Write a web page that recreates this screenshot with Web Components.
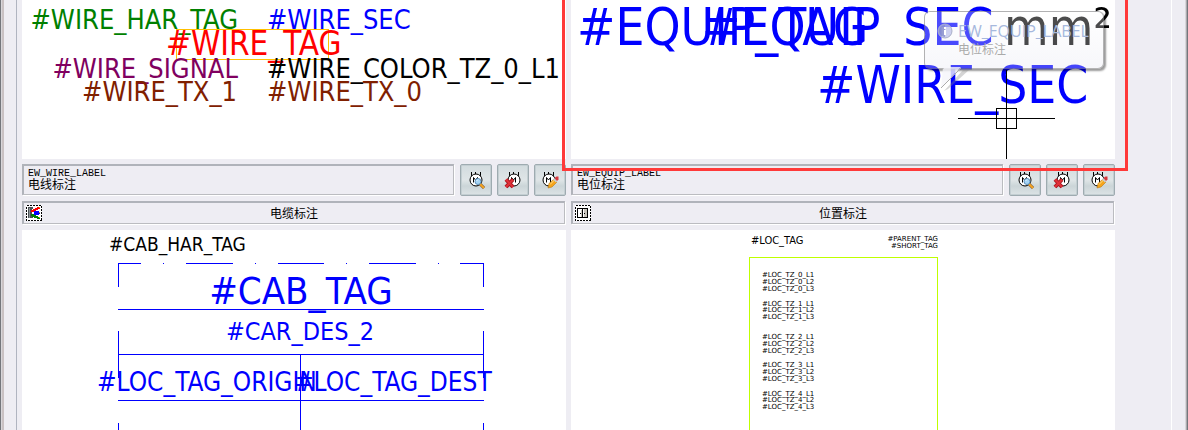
<!DOCTYPE html>
<html lang="zh-CN">
<head>
<meta charset="utf-8">
<title>电线标注</title>
<style>
	html, body {
		margin: 0;
		min-height: 100%;
	}
	body {
		display: flex;
		min-height: 100vh;
		background: #eeedf3;
		color: #000;
		font-family: "Liberation Sans", "Noto Sans CJK SC", sans-serif;
	}
</style>
</head>
<body>
<label-window>
	<label-card>
		<wire-drawing slot="drawing"></wire-drawing>
		<span slot="code">EW_WIRE_LABEL</span>
		<span slot="name">电线标注</span>
	</label-card>
	<label-card marked>
		<equip-drawing slot="drawing"></equip-drawing>
		<balloon-tip slot="tip">
			<span slot="title">EW_EQUIP_LABEL</span>
			电位标注
		</balloon-tip>
		<span slot="code">EW_EQUIP_LABEL</span>
		<span slot="name">电位标注</span>
	</label-card>
	<label-section>
		<section-icon slot="icon" kind="cable"></section-icon>
		电缆标注
		<cable-drawing slot="drawing"></cable-drawing>
	</label-section>
	<label-section>
		<section-icon slot="icon" kind="location"></section-icon>
		位置标注
		<location-drawing slot="drawing"></location-drawing>
	</label-section>
</label-window>

<script>
	const drawingStyle = /* html */ `
		<style>
			:host {
				display: block;
				background: #fff;
				font-family: "DejaVu Sans Condensed", "DejaVu Sans", sans-serif;
			}
			svg {
				display: block;
				width: 100%;
				height: auto;
			}
			text {
				white-space: pre;
			}
			.line {
				fill: none;
				shape-rendering: crispEdges;
			}
		</style>`

	class LabelWindow extends HTMLElement {
		constructor() {
			super()
			this.attachShadow({ mode: 'open' })
			this.shadowRoot.innerHTML = /* html */ `
			<style>
				:host {
					flex: 1;
					display: flex;
					min-width: 0;
					box-sizing: border-box;
					border-left: 1px solid #74767c;
					border-right: 1px solid #74767c;
				}
				.edge {
					width: 1px;
					background: #d8d6da;
					border-right: 2px solid #c9c1c3;
				}
				.edge.right {
					border-right: 1px solid #aaa9ad;
				}
				.pane {
					flex: 1;
					display: flex;
					margin: 0 13px 0 12px;
					border-left: 1px solid #b0b4c0;
					border-right: 1px solid #fff;
					min-width: 0;
				}
				.grid {
					flex: 1;
					display: grid;
					grid-template-columns: minmax(0, 1fr) minmax(0, 1fr);
					align-content: start;
					gap: 5px;
					padding: 0 56px 0 5px;
				}
			</style>
			<div class="edge"></div>
			<main class="pane"><div class="grid"><slot></slot></div></main>
			<div class="edge right"></div>
			`
		}
	}

	class LabelCard extends HTMLElement {
		constructor() {
			super()
			this.attachShadow({ mode: 'open' })
			this.shadowRoot.innerHTML = /* html */ `
			<style>
				:host {
					display: block;
					position: relative;
				}
				.footer {
					display: flex;
					gap: 5px;
					margin-top: 5px;
				}
				.info {
					flex: 1;
					box-sizing: border-box;
					height: 31px;
					padding: 2px 4px 0;
					border: 1px solid #bbbcc0;
					border-width: 2px 1px 1px 2px;
					border-top-color: #b0b3ba;
					border-left-color: #b0b3ba;
					box-shadow: 1px 1px #fff;
					margin-right: 1px;
					font: 10px/12px "Liberation Mono", "Noto Sans CJK SC", monospace;
				}
				.name {
					font-size: 12px;
				}
				.info div {
					height: 12px;
				}
				.mark {
					display: none;
				}
				:host([marked]) .mark {
					display: block;
					position: absolute;
					z-index: 1;
					inset: 0 -13px 25px -9px;
					border: 3px solid #ff3939;
					border-top: 0;
					pointer-events: none;
				}
			</style>
			<slot name="drawing"></slot>
			<slot name="tip"></slot>
			<div class="footer">
				<div class="info">
					<div><slot name="code"></slot></div>
					<div class="name"><slot name="name"></slot></div>
				</div>
				<tool-button kind="find"></tool-button>
				<tool-button kind="remove"></tool-button>
				<tool-button kind="edit"></tool-button>
			</div>
			<div class="mark"></div>
			`
		}
	}

	class LabelSection extends HTMLElement {
		constructor() {
			super()
			this.attachShadow({ mode: 'open' })
			this.shadowRoot.innerHTML = /* html */ `
			<style>
				:host {
					display: block;
				}
				h2 {
					display: grid;
					grid-template-columns: 16px 1fr 16px;
					align-items: center;
					box-sizing: border-box;
					height: 23px;
					margin: 0 1px 6px 0;
					padding: 0 2px;
					border: 1px solid #bbbcc0;
					border-width: 2px 1px 1px 2px;
					border-top-color: #b0b3ba;
					border-left-color: #b0b3ba;
					box-shadow: 1px 1px #fff;
					font: 12px/16px "Noto Sans CJK SC", sans-serif;
					text-align: center;
				}
			</style>
			<h2><slot name="icon"></slot><span><slot></slot></span></h2>
			<slot name="drawing"></slot>
			`
		}
	}

	class SectionIcon extends HTMLElement {
		static shapes = {
			cable: /* html */ `
				<path fill="#4a5054" d="M2 2h5v2h-1v8h1v1H2z"/>
				<path fill="#8b9296" d="M3 3h1v10H3z"/>
				<path fill="#f00" d="M5 5h2V4h2V3h2V2h3v2h-2v1h-2v1H9v1H5z"/>
				<path fill="#00f" d="M8 6h5v1h1v2h-1v1H8z"/>
				<path fill="#008000" d="M5 9h3v1h2v1h2v1h2v2h-3v-1H8v-1H6v-1H5z"/>
				<path fill="#e0a000" d="M13 2h1v1h-1zM13 7h1v1h-1zM13 12h1v1h-1z"/>`,
			location: /* html */ `
				<path fill="#fff" d="M3 3h10v10H3z"/>
				<path fill="#c8c4bc" d="M9 4h4v9H9zM6 5h1v7H6z"/>
				<path fill="none" stroke="#000" d="M2.500 3.500h10v9h-10zM7.500 3.500v9"/>
				<path fill="#000" d="M5 8h1v1H5zM9 8h1v1H9z"/>`
		}
		constructor() {
			super()
			this.attachShadow({ mode: 'open' })
			this.shadowRoot.innerHTML = /* html */ `
			<style>
				:host {
					display: block;
					width: 16px;
					height: 16px;
				}
				svg {
					display: block;
				}
			</style>
			<svg width="16" height="16" shape-rendering="crispEdges" aria-hidden="true">
				<path fill="#fff" d="M0 0h16v16H0z"/>
				<path fill="none" stroke="#000" stroke-dasharray="2 1" d="M.5 .5h15v15H.5z"/>
				${SectionIcon.shapes[this.getAttribute('kind')]}
			</svg>
			`
		}
	}

	class ToolButton extends HTMLElement {
		static tools = {
			find: {
				label: '查找', x: 0, shape: /* html */ `
				<path stroke="#7a4a20" stroke-width="3" d="M20 20l4 4"/>
				<path stroke="#f5a623" stroke-width="2" d="M20 20l4 4"/>
				<circle cx="18" cy="17.500" r="3" fill="#a5d4f5" stroke="#5c8fb8"/>
				<path stroke="#e4f4ff" d="M16.500 17l1.500-1.500"/>`
			},
			remove: {
				label: '删除', x: 1, shape: /* html */ `
				<path stroke="#a81820" stroke-width="4" d="M9 15.500l7 7.500M16 15.500l-7 7.500"/>
				<path stroke="#e03038" stroke-width="2" d="M9 15.500l7 7.500M16 15.500l-7 7.500"/>`
			},
			edit: {
				label: '编辑', x: -1, shape: /* html */ `
				<path fill="#f6a51c" stroke="#b87818" stroke-width=".6" d="M14 24l1-4.500 5-4.500 3 3-5 5z"/>
				<path stroke="#ffe08a" d="M16 20.500l4.500-4.500"/>
				<path fill="#c8ccd0" d="M19 15.500l1.500-1.500 3 3-1.500 1.500z"/>
				<path fill="#d8363c" d="M20.500 14l2-1.500h2v3l-1.500 1.500z"/>`
			}
		}
		constructor() {
			super()
			this.attachShadow({ mode: 'open', delegatesFocus: true })
		}
		connectedCallback() {
			let tool = ToolButton.tools[this.getAttribute('kind')]
			this.shadowRoot.innerHTML = /* html */ `
			<style>
				:host {
					display: block;
				}
				button {
					display: block;
					box-sizing: border-box;
					width: 32px;
					height: 32px;
					padding: 0;
					border: 1px solid #9eabb0;
					border-radius: 2px;
					background: linear-gradient(#d2dbde, #dfe5e7 50%, #cbd5d8 70%, #dce3e5);
					box-shadow: inset 0 0 0 1px #c3ced2;
				}
				svg {
					display: block;
					margin: -1px;
				}
			</style>
			<button type="button" aria-label="${tool.label}">
				<svg width="32" height="32" fill="none" aria-hidden="true">
					<g transform="translate(${tool.x})">
						<path stroke="#000" shape-rendering="crispEdges" d="M11.500 8v4M15.500 8v2M20.500 8v4"/>
						<circle cx="16" cy="16" r="6" fill="#fff" stroke="#000"/>
						<path stroke="#000" d="M13.500 18.500v-5l2 2.500 2-2.500v5"/>
					</g>
					${tool.shape}
				</svg>
			</button>
			`
		}
	}

	class BalloonTip extends HTMLElement {
		constructor() {
			super()
			this.attachShadow({ mode: 'open' })
			this.shadowRoot.innerHTML = /* html */ `
			<style>
				:host {
					position: absolute;
					top: 11px;
					right: 11px;
					box-sizing: border-box;
					width: 180px;
					height: 58px;
					padding: 9px 0 0 12px;
					border: 1px solid rgba(90, 90, 90, .45);
					border-radius: 6px;
					background: linear-gradient(rgba(255, 255, 255, .3), rgba(228, 229, 240, .3));
					box-shadow: 2px 2px 2px rgba(0, 0, 0, .4);
					color: #aaa;
					font: 12px/16px "Noto Sans CJK SC", sans-serif;
				}
				.row {
					display: grid;
					grid-template-columns: 16px auto;
					column-gap: 5px;
					align-items: center;
				}
				.title {
					color: #a6b8dd;
					font: 16px/20px "Open Sans", "Noto Sans", sans-serif;
				}
				.text {
					grid-column: 2;
				}
				.tail {
					position: absolute;
					top: 55px;
					left: 14px;
				}
			</style>
			<div class="row">
				<svg width="16" height="16" aria-hidden="true">
					<circle cx="8" cy="8" r="7" fill="#b9bde8" fill-opacity=".7" stroke="#aab0c8"/>
					<path fill="#8088c8" fill-opacity=".7" d="M8 2a6 6 0 0 0 0 12z"/>
					<path stroke="#fff" stroke-width="2" d="M8 4v2M8 7v5"/>
				</svg>
				<div class="title"><slot name="title"></slot></div>
				<div class="text"><slot></slot></div>
			</div>
			<svg class="tail" width="32" height="26" aria-hidden="true">
				<path fill="#888" fill-opacity=".35" d="M5 24L24 3h6L9 22z"/>
				<path fill="#f5f5fa" fill-opacity=".8" d="M4 0h18L2 21z"/>
				<path fill="none" stroke="#aaa" d="M4 1v1M22 1L2 21"/>
			</svg>
			`
		}
	}

	class WireDrawing extends HTMLElement {
		constructor() {
			super()
			this.attachShadow({ mode: 'open' })
			this.shadowRoot.innerHTML = /* html */ `
			${drawingStyle}
			<svg viewBox="0 0 544 159" font-size="27">
				<rect class="line" x="154.500" y="29.500" width="152" height="30" stroke="#ffc000"/>
				<text x="216" y="29" fill="#008000" text-anchor="end">#WIRE_HAR_TAG</text>
				<text x="245" y="29" fill="#00f">#WIRE_SEC</text>
				<text x="144" y="55" fill="#f00" font-size="33">#WIRE_TAG</text>
				<text x="216" y="78" fill="#800060" text-anchor="end">#WIRE_SIGNAL</text>
				<text x="245" y="78">#WIRE_COLOR_TZ_0_L1</text>
				<text x="215" y="101" fill="#802000" text-anchor="end">#WIRE_TX_1</text>
				<text x="245" y="101" fill="#802000">#WIRE_TX_0</text>
			</svg>
			`
		}
	}

	class EquipDrawing extends HTMLElement {
		constructor() {
			super()
			this.attachShadow({ mode: 'open' })
			this.shadowRoot.innerHTML = /* html */ `
			${drawingStyle}
			<svg viewBox="0 0 544 159" font-size="51" fill="#00f">
				<text x="6" y="45">#EQUIP_TAG</text>
				<text x="131" y="45">#EQUIP_SEC</text>
				<text x="433" y="45" fill="#000">mm²</text>
				<text x="246" y="103">#WIRE_SEC</text>
				<path class="line" stroke="#000" d="M387 118.500h97M435.500 70v89M425.500 108.500h20v20h-20z"/>
			</svg>
			`
		}
	}

	class CableDrawing extends HTMLElement {
		constructor() {
			super()
			this.attachShadow({ mode: 'open' })
			this.shadowRoot.innerHTML = /* html */ `
			${drawingStyle}
			<svg viewBox="0 0 544 200" font-size="26" fill="#00f">
				<g class="line" stroke="#00f">
					<path d="M96 33.500h23M141 33.500h1M164 33.500h47M233 33.500h1M256 33.500h46M324 33.500h1M347 33.500h47M416 33.500h1M438 33.500h24"/>
					<path d="M96.500 33v24M96.500 101v47M96.500 193v7M461.500 33v24M461.500 101v47M461.500 193v7"/>
					<path d="M96 79.500h366M96 124.500h366M96 170.500h366M278.500 124v76"/>
				</g>
				<text x="87" y="21" font-size="19" fill="#000">#CAB_HAR_TAG</text>
				<text x="279" y="74" font-size="38" text-anchor="middle">#CAB_TAG</text>
				<text x="278" y="110" font-size="25" text-anchor="middle">#CAR_DES_2</text>
				<text x="75" y="161">#LOC_TAG_ORIGIN</text>
				<text x="272" y="161">#LOC_TAG_DEST</text>
			</svg>
			`
		}
	}

	class LocationDrawing extends HTMLElement {
		constructor() {
			super()
			// baselines of the three lines of each translation group
			let groups = [[47, 54, 61], [76, 82, 89], [109, 116, 123], [137, 144, 151], [166, 172, 179]]
			let lines = groups.map((rows, i) => rows.map((y, j) =>
				`<text x="191" y="${y}">#LOC_TZ_${i}_L${j + 1}</text>`
			).join('')).join('')
			this.attachShadow({ mode: 'open' })
			this.shadowRoot.innerHTML = /* html */ `
			${drawingStyle}
			<svg viewBox="0 0 544 200">
				<path class="line" stroke="#bfff00" d="M178.500 200V27.500h188V200"/>
				<text x="180" y="14" font-size="11">#LOC_TAG</text>
				<g font-size="7" font-family="DejaVu Sans, sans-serif">
					<text x="367" y="11" text-anchor="end">#PARENT_TAG</text>
					<text x="367" y="18" text-anchor="end">#SHORT_TAG</text>
					${lines}
				</g>
			</svg>
			`
		}
	}

	customElements.define('label-window', LabelWindow)
	customElements.define('label-card', LabelCard)
	customElements.define('label-section', LabelSection)
	customElements.define('section-icon', SectionIcon)
	customElements.define('tool-button', ToolButton)
	customElements.define('balloon-tip', BalloonTip)
	customElements.define('wire-drawing', WireDrawing)
	customElements.define('equip-drawing', EquipDrawing)
	customElements.define('cable-drawing', CableDrawing)
	customElements.define('location-drawing', LocationDrawing)
</script>
</body>
</html>
